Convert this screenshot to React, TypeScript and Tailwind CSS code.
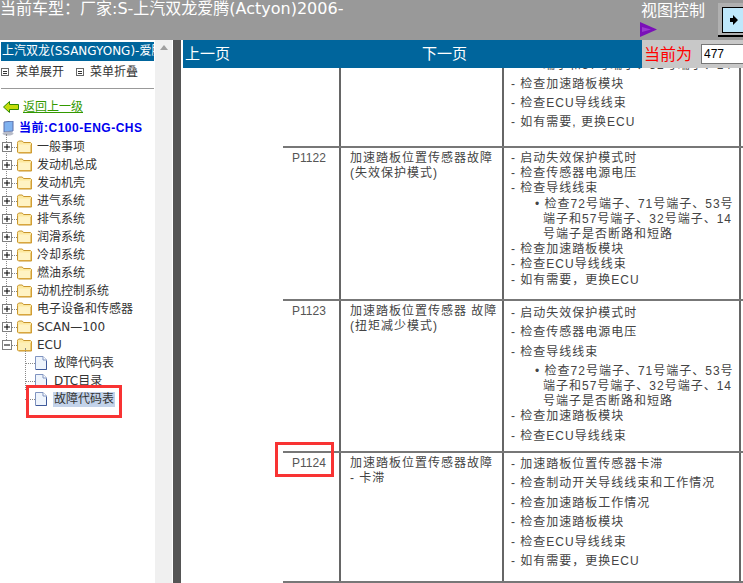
import React from 'react';

const tableFont = "font-['Liberation_Sans','Noto_Sans_CJK_SC',sans-serif]";

function Box({ open }: { open?: boolean }) {
  return (
    <svg width="10" height="10" viewBox="0 0 10 10" className="shrink-0">
      <rect x="0.5" y="0.5" width="9" height="9" fill="#fff" stroke="#808080" />
      <path d={open ? 'M2 5h6' : 'M2 5h6M5 2v6'} stroke="#000" fill="none" />
    </svg>
  );
}

function Folder({ open }: { open?: boolean }) {
  return (
    <svg width="15" height="14" viewBox="0 0 15 14" className="shrink-0">
      <path d="M.5 3.500V2.200L1.700 1h3.600l1.200 1.500h7l1 1V13H1.500l-1-1z" fill="#fde9a0" stroke="#c8962e" />
      <path d="M1.500 4.500h12V12.500H1.500z" fill={open ? '#fdf0b8' : '#fff3c4'} />
      <path d="M1.500 12.500h12.500V5" fill="none" stroke="#d9a63c" />
    </svg>
  );
}

function Page() {
  return (
    <svg width="12" height="14" viewBox="0 0 12 14" className="shrink-0">
      <path d="M.5.5h7.500l3.500 3.500v9.500H.5z" fill="#eef4fc" stroke="#7f93c0" />
      <path d="M8 .5V4h3.500" fill="#fff" stroke="#7f93c0" />
      <path d="M1 13.500h10.500V5" fill="none" stroke="#3f5a9a" />
    </svg>
  );
}

function TreeRow({ label, open }: { label: string; open?: boolean }) {
  return (
    <div className="flex h-[18px] items-center relative pl-[1px]">
      <Box open={open} />
      <div className="w-[5px] border-t border-dotted border-[#888]" />
      <Folder open={open} />
      <span className="ml-[5px] text-[12px] text-[#333] whitespace-nowrap leading-none">{label}</span>
    </div>
  );
}

function LeafRow({ label, selected }: { label: string; selected?: boolean }) {
  return (
    <div className="flex h-[18px] items-center pl-[24px]">
      <div className="w-[10px] border-t border-dotted border-[#888]" />
      <Page />
      <span className={`ml-[6px] px-[1px] text-[12px] text-[#333] whitespace-nowrap leading-[15px] ${selected ? 'bg-[#c3d3ea]' : ''}`}>
        {label}
      </span>
    </div>
  );
}

const folders = ['一般事项', '发动机总成', '发动机壳', '进气系统', '排气系统', '润滑系统', '冷却系统', '燃油系统', '动机控制系统', '电子设备和传感器', 'SCAN—100'];

function MenuIcon() {
  return (
    <span className="w-[8px] h-[8px] shrink-0 border border-[#666] flex flex-col justify-center items-center gap-[1px]">
      <i className="block w-[4px] h-px bg-[#333]" />
      <i className="block w-[4px] h-px bg-[#333]" />
    </span>
  );
}

function Sidebar() {
  return (
    <aside className="w-[155px] shrink-0 relative pt-[2px] pl-[1px] overflow-hidden">
      <div className="h-[19px] w-[153px] bg-[#00659c] text-white text-[12px] leading-[19px] whitespace-nowrap overflow-hidden pl-[1px]">
        上汽双龙(SSANGYONG)-爱腾
      </div>
      <div className="flex items-center h-[20px] mt-[1px] text-[12px] text-[#333]">
        <MenuIcon />
        <span className="ml-[7px]">菜单展开</span>
        <span className="ml-[12px]"><MenuIcon /></span>
        <span className="ml-[6px]">菜单折叠</span>
      </div>
      <div className="h-px bg-[#999] w-[153px] mt-[6px]" />
      <div className="flex items-center h-[18px] mt-[9px] pl-[2px]">
        <svg width="16" height="12" viewBox="0 0 16 12">
          <path d="M.5 6 6.500.5V3.500H15.500V8.500H6.500V11.500z" fill="#c4dc0a" stroke="#2f8a00" />
        </svg>
        <span className="ml-[4px] text-[12px] text-[#339900] underline">返回上一级</span>
      </div>
      <div className="flex items-center h-[18px] mt-[3px] pl-[1px]">
        <svg width="13" height="15" viewBox="0 0 13 15">
          <path d="M2 1 11 0v10l-9 1z" fill="#7fb2f0" stroke="#5a6fa8" />
          <ellipse cx="6" cy="12.500" rx="5.500" ry="2" fill="#b8bcc8" />
        </svg>
        <span className={`ml-[4px] text-[12px] font-bold text-[#0000ee] whitespace-nowrap tracking-[0.5px] ${tableFont}`}>当前:C100-ENG-CHS</span>
      </div>
      <div className="relative mt-[1px]">
        <div className="absolute left-[5px] top-[-4px] h-[216px] border-l border-dotted border-[#888]" />
        {folders.map((f) => (
          <TreeRow key={f} label={f} />
        ))}
        <TreeRow label="ECU" open />
        <div className="relative">
          <div className="absolute left-[24px] top-[-6px] h-[42px] border-l border-dotted border-[#888]" />
          <LeafRow label="故障代码表" />
          <LeafRow label="DTC目录" />
          <LeafRow label="故障代码表" selected />
          <div className="absolute left-[25px] top-[31px] w-[96px] h-[33px] border-[3px] border-[#f83333]" />
        </div>
      </div>
    </aside>
  );
}

function Lines({ items, gap }: { items: string[]; gap: number }) {
  return (
    <div>
      {items.map((t, i) => (
        <div
          key={i}
          style={{ height: gap, lineHeight: `${gap}px` }}
          className={`whitespace-nowrap ${t.startsWith('•') ? 'pl-[24px]' : t.startsWith('~') ? 'pl-[32px]' : ''}`}
        >
          {t.replace('~', '')}
        </div>
      ))}
    </div>
  );
}

function Row({ code, name, h, children, boxed }: { code?: string; name?: string[]; h: number; children: React.ReactNode; boxed?: boolean }) {
  return (
    <div style={{ height: h }} className="flex border-b-2 border-[#777] text-[#444] text-[12px] tracking-[1px] relative">
      <div className="w-[56px] shrink-0 pl-[9px] pt-[1px] text-[#555] tracking-normal">{code}</div>
      <div className="w-[163px] shrink-0 border-l-2 border-[#666] pl-[9px] pt-[3px] leading-[15px]">
        {name?.map((n) => (
          <div key={n} className="whitespace-nowrap">{n}</div>
        ))}
      </div>
      <div className="w-[239px] shrink-0 border-l-2 border-r-2 border-[#666] pl-[7px] overflow-hidden">{children}</div>
      {boxed && <div className="absolute left-[-8px] top-[-11px] w-[59px] h-[35px] border-[3px] border-[#f83333]" />}
    </div>
  );
}

function Content() {
  return (
    <main className={`flex-1 min-w-0 flex flex-col relative ${tableFont}`}>
      <div className="h-[28px] shrink-0 bg-[#00659c] text-white text-[15px] flex items-center relative">
        <span className="ml-[2px]">上一页</span>
        <span className="ml-[192px]">下一页</span>
        <div className="absolute right-0 top-0 w-[101px] h-[28px] bg-[#c8c8c8] flex items-center overflow-hidden">
          <span className="text-[#ff0000] text-[16px] ml-[2px] mt-[2px] whitespace-nowrap">当前为</span>
          <input
            readOnly
            value="477"
            className="ml-[9px] w-[60px] h-[20px] shrink-0 bg-white border border-[#777] border-r-0 text-[12px] text-black pl-[2px]"
          />
        </div>
      </div>
      <div className="flex-1 overflow-hidden pl-[100px]">
        <div style={{ height: 80 }} className="flex border-b-2 border-[#777] text-[#444] text-[12px] tracking-[1px] overflow-hidden">
          <div className="w-[56px] shrink-0" />
          <div className="w-[163px] shrink-0 border-l-2 border-[#666]" />
          <div className="w-[239px] shrink-0 border-l-2 border-r-2 border-[#666] pl-[7px] flex flex-col justify-end pb-[14px] overflow-hidden">
            <Lines gap={19} items={['~端子和57号端子、32号端子、14', '- 检查加速踏板模块', '- 检查ECU导线线束', '- 如有需要, 更换ECU']} />
          </div>
        </div>
        <Row code="P1122" name={['加速踏板位置传感器故障', '(失效保护模式)']} h={153}>
          <div className="pt-[3px]">
            <Lines gap={15.2} items={['- 启动失效保护模式时', '- 检查传感器电源电压', '- 检查导线线束', '• 检查72号端子、71号端子、53号', '~端子和57号端子、32号端子、14', '~号端子是否断路和短路', '- 检查加速踏板模块', '- 检查ECU导线线束', '- 如有需要，更换ECU']} />
          </div>
        </Row>
        <Row code="P1123" name={['加速踏板位置传感器 故障', '(扭矩减少模式)']} h={152}>
          <div className="pt-[3px]">
            <Lines gap={19.3} items={['- 启动失效保护模式时', '- 检查传感器电源电压', '- 检查导线线束']} />
            <div className="mt-[2px]">
              <Lines gap={15} items={['• 检查72号端子、71号端子、53号', '~端子和57号端子、32号端子、14', '~号端子是否断路和短路', '- 检查加速踏板模块']} />
            </div>
            <div className="mt-[5px]">
              <Lines gap={15} items={['- 检查ECU导线线束']} />
            </div>
          </div>
        </Row>
        <Row code="P1124" name={['加速踏板位置传感器故障', '-  卡滞']} h={130} boxed>
          <div className="pt-[2px]">
            <Lines gap={19.4} items={['- 加速踏板位置传感器卡滞', '- 检查制动开关导线线束和工作情况', '- 检查加速踏板工作情况', '- 检查加速踏板模块', '- 检查ECU导线线束', '- 如有需要，更换ECU']} />
          </div>
        </Row>
      </div>
    </main>
  );
}

export default function App() {
  return (
    <div className="w-[743px] h-[583px] overflow-hidden bg-white flex flex-col font-['DejaVu_Sans','Noto_Sans_CJK_SC',sans-serif]">
      <header className="h-[40px] shrink-0 bg-[#999999] flex text-white relative overflow-hidden">
        <div className="text-[16px] leading-[18px] whitespace-nowrap">当前车型：厂家:S-上汽双龙爱腾(Actyon)2006-</div>
        <div className="absolute left-[641px] top-[2px] text-[16px] leading-[18px] whitespace-nowrap">视图控制</div>
        <svg width="17" height="15" viewBox="0 0 17 15" className="absolute left-[640px] top-[22px]">
          <path d="M0 0 17 7.500 0 15z" fill="#7a10b8" />
          <path d="M2 5 11 7.500 2 10z" fill="#9a3ad0" />
        </svg>
        <div className="absolute left-[718px] top-[3px] w-[30px] h-[34px] bg-[#b0b0b0] border-b-2 border-black pl-[4px] pt-[4px]">
          <div className="w-[24px] h-[26px] bg-[#bfe8fb] border border-black flex items-center justify-center">
            <svg width="8" height="10" viewBox="0 0 8 10">
              <path d="M0 3h3V0l5 5-5 5V7H0z" fill="#000" />
            </svg>
          </div>
        </div>
      </header>
      <div className="flex-1 flex min-h-0">
        <Sidebar />
        <div className="w-[17px] shrink-0 bg-[#f0f0f0] flex justify-center pt-[5px]">
          <svg width="8" height="5" viewBox="0 0 8 5"><path d="M4 0l4 5H0z" fill="#a0a0a0" /></svg>
        </div>
        <div className="w-[1px] shrink-0 bg-white" />
        <div className="w-[8px] shrink-0 bg-[#555555]" />
        <div className="w-[2px] shrink-0 bg-white" />
        <Content />
      </div>
    </div>
  );
}
